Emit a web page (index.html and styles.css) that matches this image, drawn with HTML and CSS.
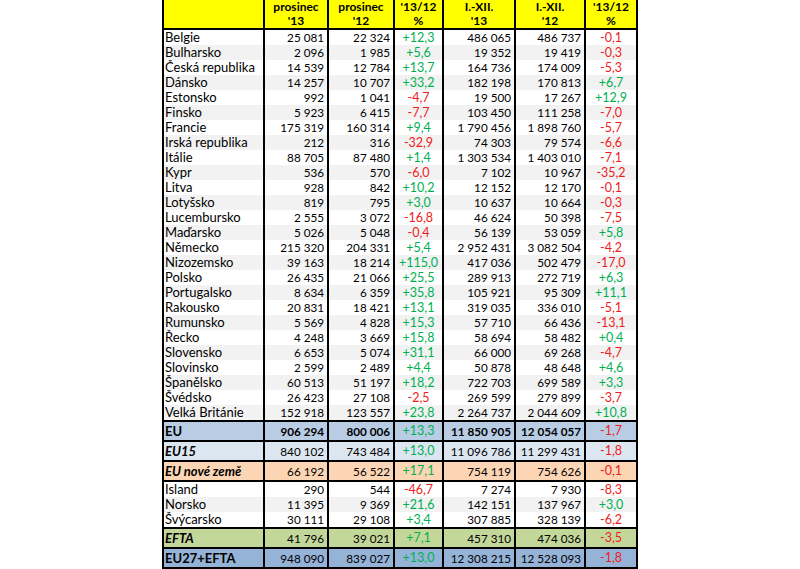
FILE: index.html
```html
<!DOCTYPE html>
<html lang="cs">
<head>
<meta charset="utf-8">
<title>Registrace</title>
<link rel="stylesheet" href="styles.css">
</head>
<body>
<div class="sheet">
  <div class="row head">
    <div class="c name"></div>
    <div class="c">prosinec<br>'13</div>
    <div class="c">prosinec<br>'12</div>
    <div class="c">'13/12<br>%</div>
    <div class="c">I.-XII.<br>'13</div>
    <div class="c">I.-XII.<br>'12</div>
    <div class="c">'13/12<br>%</div>
  </div>

  <div class="row"><div class="c name">Belgie</div><div class="c n">25 081</div><div class="c n">22 324</div><div class="c p up">+12,3</div><div class="c n">486 065</div><div class="c n">486 737</div><div class="c p dn">-0,1</div></div>
  <div class="row alt"><div class="c name">Bulharsko</div><div class="c n">2 096</div><div class="c n">1 985</div><div class="c p up">+5,6</div><div class="c n">19 352</div><div class="c n">19 419</div><div class="c p dn">-0,3</div></div>
  <div class="row"><div class="c name">Česká republika</div><div class="c n">14 539</div><div class="c n">12 784</div><div class="c p up">+13,7</div><div class="c n">164 736</div><div class="c n">174 009</div><div class="c p dn">-5,3</div></div>
  <div class="row alt"><div class="c name">Dánsko</div><div class="c n">14 257</div><div class="c n">10 707</div><div class="c p up">+33,2</div><div class="c n">182 198</div><div class="c n">170 813</div><div class="c p up">+6,7</div></div>
  <div class="row"><div class="c name">Estonsko</div><div class="c n">992</div><div class="c n">1 041</div><div class="c p dn">-4,7</div><div class="c n">19 500</div><div class="c n">17 267</div><div class="c p up">+12,9</div></div>
  <div class="row alt"><div class="c name">Finsko</div><div class="c n">5 923</div><div class="c n">6 415</div><div class="c p dn">-7,7</div><div class="c n">103 450</div><div class="c n">111 258</div><div class="c p dn">-7,0</div></div>
  <div class="row"><div class="c name">Francie</div><div class="c n">175 319</div><div class="c n">160 314</div><div class="c p up">+9,4</div><div class="c n">1 790 456</div><div class="c n">1 898 760</div><div class="c p dn">-5,7</div></div>
  <div class="row alt"><div class="c name">Irská republika</div><div class="c n">212</div><div class="c n">316</div><div class="c p dn">-32,9</div><div class="c n">74 303</div><div class="c n">79 574</div><div class="c p dn">-6,6</div></div>
  <div class="row"><div class="c name">Itálie</div><div class="c n">88 705</div><div class="c n">87 480</div><div class="c p up">+1,4</div><div class="c n">1 303 534</div><div class="c n">1 403 010</div><div class="c p dn">-7,1</div></div>
  <div class="row alt"><div class="c name">Kypr</div><div class="c n">536</div><div class="c n">570</div><div class="c p dn">-6,0</div><div class="c n">7 102</div><div class="c n">10 967</div><div class="c p dn">-35,2</div></div>
  <div class="row"><div class="c name">Litva</div><div class="c n">928</div><div class="c n">842</div><div class="c p up">+10,2</div><div class="c n">12 152</div><div class="c n">12 170</div><div class="c p dn">-0,1</div></div>
  <div class="row alt"><div class="c name">Lotyšsko</div><div class="c n">819</div><div class="c n">795</div><div class="c p up">+3,0</div><div class="c n">10 637</div><div class="c n">10 664</div><div class="c p dn">-0,3</div></div>
  <div class="row"><div class="c name">Lucembursko</div><div class="c n">2 555</div><div class="c n">3 072</div><div class="c p dn">-16,8</div><div class="c n">46 624</div><div class="c n">50 398</div><div class="c p dn">-7,5</div></div>
  <div class="row alt"><div class="c name">Maďarsko</div><div class="c n">5 026</div><div class="c n">5 048</div><div class="c p dn">-0,4</div><div class="c n">56 139</div><div class="c n">53 059</div><div class="c p up">+5,8</div></div>
  <div class="row"><div class="c name">Německo</div><div class="c n">215 320</div><div class="c n">204 331</div><div class="c p up">+5,4</div><div class="c n">2 952 431</div><div class="c n">3 082 504</div><div class="c p dn">-4,2</div></div>
  <div class="row alt"><div class="c name">Nizozemsko</div><div class="c n">39 163</div><div class="c n">18 214</div><div class="c p up">+115,0</div><div class="c n">417 036</div><div class="c n">502 479</div><div class="c p dn">-17,0</div></div>
  <div class="row"><div class="c name">Polsko</div><div class="c n">26 435</div><div class="c n">21 066</div><div class="c p up">+25,5</div><div class="c n">289 913</div><div class="c n">272 719</div><div class="c p up">+6,3</div></div>
  <div class="row alt"><div class="c name">Portugalsko</div><div class="c n">8 634</div><div class="c n">6 359</div><div class="c p up">+35,8</div><div class="c n">105 921</div><div class="c n">95 309</div><div class="c p up">+11,1</div></div>
  <div class="row"><div class="c name">Rakousko</div><div class="c n">20 831</div><div class="c n">18 421</div><div class="c p up">+13,1</div><div class="c n">319 035</div><div class="c n">336 010</div><div class="c p dn">-5,1</div></div>
  <div class="row alt"><div class="c name">Rumunsko</div><div class="c n">5 569</div><div class="c n">4 828</div><div class="c p up">+15,3</div><div class="c n">57 710</div><div class="c n">66 436</div><div class="c p dn">-13,1</div></div>
  <div class="row"><div class="c name">Řecko</div><div class="c n">4 248</div><div class="c n">3 669</div><div class="c p up">+15,8</div><div class="c n">58 694</div><div class="c n">58 482</div><div class="c p up">+0,4</div></div>
  <div class="row alt"><div class="c name">Slovensko</div><div class="c n">6 653</div><div class="c n">5 074</div><div class="c p up">+31,1</div><div class="c n">66 000</div><div class="c n">69 268</div><div class="c p dn">-4,7</div></div>
  <div class="row"><div class="c name">Slovinsko</div><div class="c n">2 599</div><div class="c n">2 489</div><div class="c p up">+4,4</div><div class="c n">50 878</div><div class="c n">48 648</div><div class="c p up">+4,6</div></div>
  <div class="row alt"><div class="c name">Španělsko</div><div class="c n">60 513</div><div class="c n">51 197</div><div class="c p up">+18,2</div><div class="c n">722 703</div><div class="c n">699 589</div><div class="c p up">+3,3</div></div>
  <div class="row"><div class="c name">Švédsko</div><div class="c n">26 423</div><div class="c n">27 108</div><div class="c p dn">-2,5</div><div class="c n">269 599</div><div class="c n">279 899</div><div class="c p dn">-3,7</div></div>
  <div class="row alt"><div class="c name">Velká Británie</div><div class="c n">152 918</div><div class="c n">123 557</div><div class="c p up">+23,8</div><div class="c n">2 264 737</div><div class="c n">2 044 609</div><div class="c p up">+10,8</div></div>

  <div class="row sum eu"><div class="c name b">EU</div><div class="c n b">906 294</div><div class="c n b">800 006</div><div class="c p up">+13,3</div><div class="c n b">11 850 905</div><div class="c n b">12 054 057</div><div class="c p dn">-1,7</div></div>
  <div class="row sum eu15"><div class="c name bi">EU15</div><div class="c n">840 102</div><div class="c n">743 484</div><div class="c p up">+13,0</div><div class="c n">11 096 786</div><div class="c n">11 299 431</div><div class="c p dn">-1,8</div></div>
  <div class="row sum new"><div class="c name bi">EU nové země</div><div class="c n">66 192</div><div class="c n">56 522</div><div class="c p up">+17,1</div><div class="c n">754 119</div><div class="c n">754 626</div><div class="c p dn">-0,1</div></div>

  <div class="row top"><div class="c name">Island</div><div class="c n">290</div><div class="c n">544</div><div class="c p dn">-46,7</div><div class="c n">7 274</div><div class="c n">7 930</div><div class="c p dn">-8,3</div></div>
  <div class="row alt"><div class="c name">Norsko</div><div class="c n">11 395</div><div class="c n">9 369</div><div class="c p up">+21,6</div><div class="c n">142 151</div><div class="c n">137 967</div><div class="c p up">+3,0</div></div>
  <div class="row"><div class="c name">Švýcarsko</div><div class="c n">30 111</div><div class="c n">29 108</div><div class="c p up">+3,4</div><div class="c n">307 885</div><div class="c n">328 139</div><div class="c p dn">-6,2</div></div>

  <div class="row sum efta"><div class="c name bi">EFTA</div><div class="c n">41 796</div><div class="c n">39 021</div><div class="c p up">+7,1</div><div class="c n">457 310</div><div class="c n">474 036</div><div class="c p dn">-3,5</div></div>
  <div class="row sum total"><div class="c name b">EU27+EFTA</div><div class="c n">948 090</div><div class="c n">839 027</div><div class="c p up">+13,0</div><div class="c n">12 308 215</div><div class="c n">12 528 093</div><div class="c p dn">-1,8</div></div>
</div>
</body>
</html>
```

FILE: styles.css
```css
html, body {
  margin: 0;
  padding: 0;
  background: #ffffff;
}

body {
  font-family: Lato, "Open Sans", "Liberation Sans", sans-serif;
  font-size: 13px;
  color: #000000;
}

.sheet {
  width: 476px;
  margin: 0 auto;
  border-bottom: 2px solid #000;
}

.row {
  display: grid;
  grid-template-columns: 103px 64px 66px 49px 72px 70px 52px;
  height: 15px;
  line-height: 15px;
  background: #ffffff;
}

.row.alt {
  background: #f2f2f2;
}

.c {
  box-sizing: border-box;
  border-right: 2px solid #000;
  white-space: nowrap;
  overflow: hidden;
}

.c.name {
  border-left: 2px solid #000;
  padding-left: 1px;
  font-size: 13px;
}

.c.n {
  text-align: right;
  padding-right: 3px;
  font-size: 11.7px;
}

.c.p {
  text-align: center;
  font-size: 12.5px;
}

.up { color: #00b050; }
.dn { color: #ee1c1c; }

.b { font-weight: bold; }
.bi { font-weight: bold; font-style: italic; }

.head {
  height: 30px;
  line-height: 14px;
  background: #ffff00;
  border-bottom: 2px solid #000;
  box-sizing: border-box;
  font-weight: bold;
  font-size: 12px;
  text-align: center;
}

.head .c {
  text-align: center;
}

.sum {
  height: 20px;
  line-height: 18px;
  border-top: 2px solid #000;
  box-sizing: border-box;
}

.top {
  height: 17px;
  border-top: 2px solid #000;
  box-sizing: border-box;
}

.eu { background: #b8cce4; }
.eu15 { background: #dce6f1; }
.new { background: #fcd5b4; }
.efta { background: #c4d79b; }
.total { background: #95b3d7; }
```
